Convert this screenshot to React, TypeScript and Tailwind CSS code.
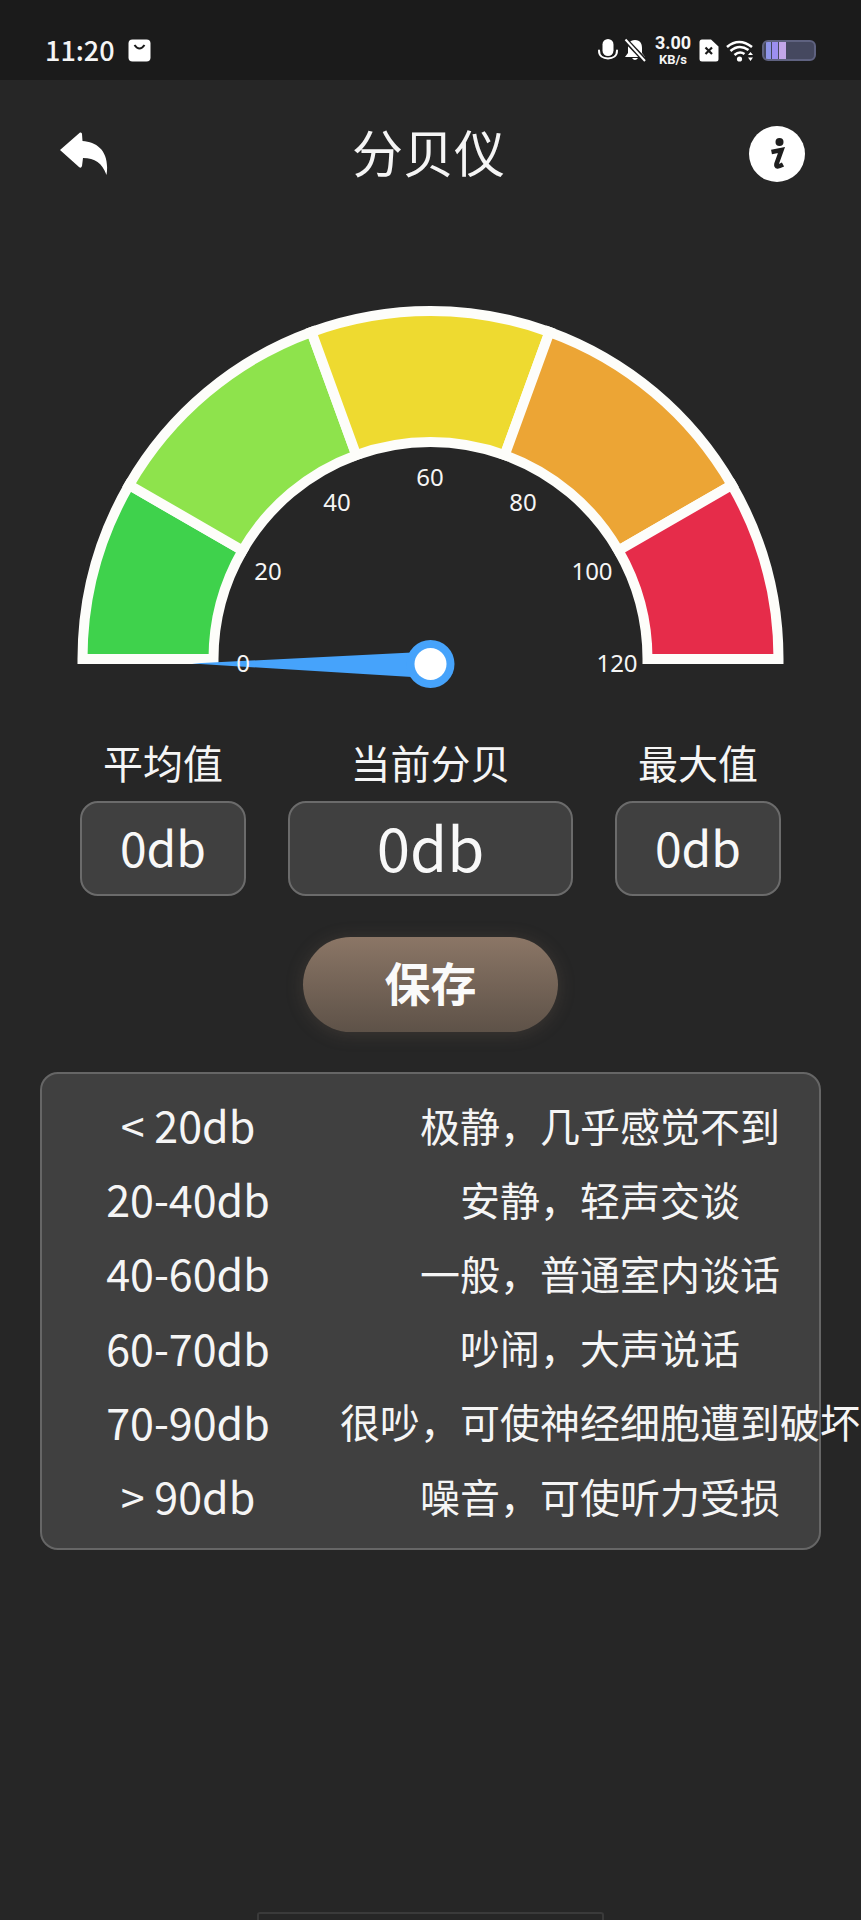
import React from "react";

const CX = 430.5;
const CY = 659;
const pt = (r: number, deg: number) => {
  const a = (deg * Math.PI) / 180;
  return `${(CX - r * Math.cos(a)).toFixed(2)} ${(CY - r * Math.sin(a)).toFixed(2)}`;
};
const seg = (a: number, b: number) =>
  `M${pt(348, a)} A348 348 0 0 1 ${pt(348, b)} L${pt(217, b)} A217 217 0 0 0 ${pt(217, a)} Z`;

const segments: [number, number, string][] = [
  [0, 30, "#3fd24c"],
  [30, 70, "#8ee34c"],
  [70, 110, "#eeda30"],
  [110, 150, "#eca535"],
  [150, 180, "#e62c4a"],
];
const ticks: [string, number, number][] = [
  ["0", 243, 663],
  ["20", 268, 571],
  ["40", 337, 502],
  ["60", 430, 477],
  ["80", 523, 502],
  ["100", 592, 571],
  ["120", 617, 663],
];
const rows: [string, string][] = [
  ["< 20db", "极静，几乎感觉不到"],
  ["20-40db", "安静，轻声交谈"],
  ["40-60db", "一般，普通室内谈话"],
  ["60-70db", "吵闹，大声说话"],
  ["70-90db", "很吵，可使神经细胞遭到破坏"],
  ["> 90db", "噪音，可使听力受损"],
];

function Gauge() {
  return (
    <svg width="861" height="472" viewBox="0 228 861 472" className="block">
      {segments.map(([a, b, c]) => (
        <path key={a} d={seg(a, b)} fill={c} stroke="#fdfdfa" strokeWidth="10" strokeLinejoin="miter" />
      ))}
      <path d="M192 663.5 L412 652.5 L412 677 Z" fill="#46a3fb" />
      <circle cx="430.5" cy="664" r="24" fill="#46a3fb" />
      <circle cx="430.5" cy="664" r="16" fill="#ffffff" />
      {ticks.map(([t, x, y]) => (
        <text
          key={t}
          x={x}
          y={y + 8.5}
          textAnchor="middle"
          fill="#f5f5f5"
          fontSize="24"
          fontFamily="'Noto Sans', sans-serif"
        >
          {t}
        </text>
      ))}
    </svg>
  );
}

function StatusIcons() {
  return (
    <div className="flex items-center">
      <svg width="24" height="26" viewBox="0 0 24 26">
        <rect x="6.5" y="2" width="11" height="17" rx="5.5" fill="#fff" />
        <path d="M3 13.5 C3 19 7 21.5 12 21.5 C17 21.5 21 19 21 13.5" fill="none" stroke="#fff" strokeWidth="2" strokeLinecap="round" />
      </svg>
      <svg width="24" height="26" viewBox="0 0 24 26" className="ml-[3px]">
        <path d="M12 3 C6.5 3 5 7 5 11 L5 16 L2 20 L22 20 L19 16 L19 11 C19 7 17.5 3 12 3 Z M9 21 Q12 25 15 21 Z" fill="#fff" />
        <path d="M1.5 2 L22.5 24" stroke="#1b1b1b" strokeWidth="5" />
        <path d="M2.5 2.5 L22 24" stroke="#fff" strokeWidth="2" />
      </svg>
      <div className="ml-[8px] flex w-[36px] flex-col items-center font-bold text-[#f5f5f5] [font-family:Roboto,sans-serif]">
        <span className="text-[18px] leading-[16px]">3.00</span>
        <span className="mt-[3px] text-[13px] leading-[11px]">KB/s</span>
      </div>
      <svg width="20" height="23" viewBox="0 0 20 23" className="ml-[8px]">
        <path d="M3 0.5 H12 L19.5 7.5 V20 Q19.5 22.5 17 22.5 H3 Q0.5 22.5 0.5 20 V3 Q0.5 0.5 3 0.5 Z" fill="#fff" />
        <path d="M6.5 8.5 L13 15 M13 8.5 L6.5 15" stroke="#1b1b1b" strokeWidth="2.2" />
      </svg>
      <svg width="28" height="23" viewBox="0 0 28 23" className="ml-[7px]">
        <path d="M1 8 Q13 -2 26 8" fill="none" stroke="#fff" strokeWidth="2.6" />
        <path d="M4.5 12 Q13 4.5 22.5 11" fill="none" stroke="#fff" strokeWidth="2.6" />
        <path d="M8.5 16 Q13.5 11.5 18.5 15" fill="none" stroke="#fff" strokeWidth="2.6" />
        <circle cx="13.5" cy="20" r="2.6" fill="#fff" />
        <path d="M24.5 13 L27 16 H22 Z M24.5 22 L27 18.5 H22 Z" fill="#fff" />
      </svg>
      <div className="ml-[8px] flex h-[21px] w-[54px] items-center overflow-hidden rounded-[6px] border-2 border-[#5f6280] bg-[#45485f] pl-[2px]">
        <div className="h-full w-[5px] bg-[#8f95ea]" />
        <div className="ml-[1px] h-full w-[6px] bg-[#9c8ff0]" />
        <div className="ml-[1px] h-full w-[7px] bg-[#c2a6e8]" />
      </div>
    </div>
  );
}

function ValueBox({ label, wide }: { label: string; wide?: boolean }) {
  return (
    <div className="flex flex-col items-center">
      <div className="h-[57px] text-[40px] leading-[52px] text-[#f5f5f5]">{label}</div>
      <div
        className={
          wide
            ? "mt-[8px] flex h-[95px] w-[285px] items-center justify-center rounded-[18px] border-2 border-[#6b6b6b] bg-[#404040] pb-[6px] text-[60px] leading-none text-[#f8f8f8]"
            : "mt-[8px] flex h-[95px] w-[166px] items-center justify-center rounded-[18px] border-2 border-[#6b6b6b] bg-[#404040] pb-[6px] text-[48px] leading-none text-[#f8f8f8]"
        }
      >
        0db
      </div>
    </div>
  );
}

export default function App() {
  return (
    <div className="flex min-h-[1920px] w-[861px] flex-col overflow-hidden bg-[#262626] text-white [font-family:'Noto_Sans_CJK_SC',sans-serif]">
      <div className="flex h-20 shrink-0 items-center justify-between bg-[#1b1b1b] pl-[45px] pr-[45px] pt-[20px]">
        <div className="flex items-center">
          <span className="mb-[2px] text-[27px] font-medium leading-none text-[#f5f5f5]">11:20</span>
          <svg width="23" height="23" viewBox="0 0 23 23" className="ml-[13px]">
            <rect x="0.5" y="0.5" width="22" height="22" rx="4" fill="#fff" />
            <path d="M6.5 6 Q11.5 13 16.5 6" fill="none" stroke="#1b1b1b" strokeWidth="2" />
          </svg>
        </div>
        <StatusIcons />
      </div>

      <div className="flex h-[148px] shrink-0 items-center justify-between pl-[60px] pr-[56px]">
        <svg width="48" height="44" viewBox="60 134 48 44">
          <path
            d="M60 152 L80 134.5 Q82 134 82 136 L82.5 143 C98 144 110 154 106.5 177 C102 165 95 160 83 160 L82 168 Q81 171 79 169 Z"
            fill="#fff"
          />
        </svg>
        <div className="mb-[5px] text-[51px] leading-none text-[#f5f5f5]">分贝仪</div>
        <svg width="56" height="56" viewBox="749 127 56 56">
          <circle cx="777" cy="155" r="28" fill="#fff" />
          <circle cx="779.5" cy="143" r="4" fill="#1e1e1e" />
          <path d="M771.5 153 L781.5 151 L776.5 165 Q775.5 169.5 783 165.5" fill="none" stroke="#1e1e1e" strokeWidth="4.6" />
        </svg>
      </div>

      <Gauge />

      <div className="mt-[36px] flex justify-center gap-[42px]">
        <ValueBox label="平均值" />
        <ValueBox label="当前分贝" wide />
        <ValueBox label="最大值" />
      </div>

      <div className="mt-[41px] flex h-[95px] w-[255px] items-center justify-center self-center rounded-full bg-gradient-to-b from-[#8b7666] to-[#5e5248] pb-[7px] text-[46px] font-bold text-[#fafafa] shadow-[0_2px_18px_rgba(139,118,102,0.22)]">
        保存
      </div>

      <div className="mt-[40px] ml-[40px] w-[781px] rounded-[18px] border-2 border-[#666666] bg-[#404040] pb-[12px] pt-[17px]">
        {rows.map(([a, b]) => (
          <div key={a} className="flex h-[74.2px] items-center whitespace-nowrap pb-[7px] text-[#f5f5f5]">
            <div className="w-[292px] shrink-0 text-center text-[43px] leading-none">{a}</div>
            <div className="ml-[4px] w-[524px] shrink-0 text-center text-[40px] leading-none">{b}</div>
          </div>
        ))}
      </div>

      <div className="mt-auto h-[8px] w-[347px] self-center rounded-t-[3px] border-x-2 border-t-2 border-[#3a3a3a]" />
    </div>
  );
}
